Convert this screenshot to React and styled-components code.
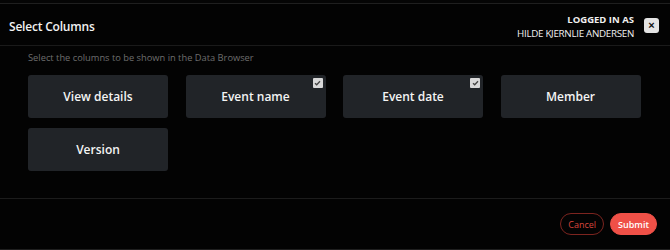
import React from 'react';
import styled, { createGlobalStyle } from 'styled-components';

const GlobalStyle = createGlobalStyle`
    html, body {
        margin: 0;
        padding: 0;
        background-color: #050505;
        font-family: "Open Sans", "Liberation Sans", sans-serif;
    }
`;

const Modal = styled.div`
    width: 670px;
    height: 247px;
    margin-top: 3px;
    border-top: 1px solid #1f1f1f;
    border-bottom: 1px solid #1f1f1f;
    box-sizing: border-box;
    display: flex;
    flex-direction: column;
    background-color: #030303;
`;

const Header = styled.div`
    height: 42px;
    box-sizing: border-box;
    border-bottom: 1px solid #1a1a1a;
    display: flex;
    align-items: center;
    padding: 0 11px 0 9px;
`;

const Title = styled.h2`
    flex: 1;
    margin: 0;
    padding-top: 4px;
    font-size: 12px;
    font-weight: 600;
    color: #f2f2f2;
    letter-spacing: -0.2px;
`;

const User = styled.div`
    display: flex;
    flex-direction: column;
    align-items: flex-end;
    margin-right: 10px;
    color: #f0f0f0;
    line-height: 14px;
    margin-top: 4px;
`;

const UserLabel = styled.span`
    font-size: 9.5px;
    font-weight: 700;
`;

const UserName = styled.span`
    font-size: 9.8px;
    letter-spacing: -0.3px;
`;

const CloseButton = styled.button`
    width: 15px;
    height: 15px;
    padding: 0;
    border: none;
    border-radius: 3px;
    background-color: #e4e4e4;
    color: #111;
    font-size: 11px;
    font-weight: 700;
    line-height: 15px;
    display: flex;
    align-items: center;
    justify-content: center;
    margin-top: 2px;
`;

const Body = styled.div`
    flex: 1;
    padding: 5px 28px 0;
`;

const Hint = styled.p`
    margin: 0 0 11px;
    font-size: 9.3px;
    color: #6e6e6e;
`;

const Grid = styled.div`
    display: grid;
    grid-template-columns: repeat(4, 140px);
    column-gap: 17.5px;
    row-gap: 10px;
`;

const Card = styled.div`
    position: relative;
    height: 43px;
    border-radius: 3px;
    background-color: #212428;
    display: flex;
    align-items: center;
    justify-content: center;
    font-size: 12px;
    font-weight: 600;
    color: #f4f4f4;
`;

const Check = styled.span`
    position: absolute;
    top: 3px;
    right: 3px;
    width: 10px;
    height: 10px;
    border-radius: 1px;
    background-color: #d8d8d8;
    display: flex;
    align-items: center;
    justify-content: center;
`;

const Footer = styled.div`
    height: 50px;
    border-top: 1px solid #1c1c1c;
    display: flex;
    align-items: center;
    justify-content: flex-end;
    gap: 6px;
    padding: 0 13px 0 0;
`;

const PillButton = styled.button`
    height: 22px;
    padding: 0 7px;
    border-radius: 11px;
    font-family: inherit;
    font-size: 9px;
    cursor: pointer;
    border: 1px solid ${props => props.primary ? '#ef5047' : '#7c241f'};
    background-color: ${props => props.primary ? '#ef5047' : 'transparent'};
    color: ${props => props.primary ? '#fff' : '#d9463d'};
    font-weight: ${props => props.primary ? 600 : 400};
`;

const columns = [
    { name: 'View details', checked: false },
    { name: 'Event name', checked: true },
    { name: 'Event date', checked: true },
    { name: 'Member', checked: false },
    { name: 'Version', checked: false },
];

function App() {
    return (
        <>
            <GlobalStyle />
            <Modal>
                <Header>
                    <Title>Select Columns</Title>
                    <User>
                        <UserLabel>LOGGED IN AS</UserLabel>
                        <UserName>HILDE KJERNLIE ANDERSEN</UserName>
                    </User>
                    <CloseButton>×</CloseButton>
                </Header>
                <Body>
                    <Hint>Select the columns to be shown in the Data Browser</Hint>
                    <Grid>
                        {columns.map((column, key) => (
                            <Card key={key}>
                                {column.name}
                                {column.checked && (
                                    <Check>
                                        <svg width="7" height="6" viewBox="0 0 7 6">
                                            <path d="M1 3.2 L2.7 4.8 L6 1.2" fill="none" stroke="#444" strokeWidth="1.3" />
                                        </svg>
                                    </Check>
                                )}
                            </Card>
                        ))}
                    </Grid>
                </Body>
                <Footer>
                    <PillButton>Cancel</PillButton>
                    <PillButton primary>Submit</PillButton>
                </Footer>
            </Modal>
        </>
    );
}

export default App;
